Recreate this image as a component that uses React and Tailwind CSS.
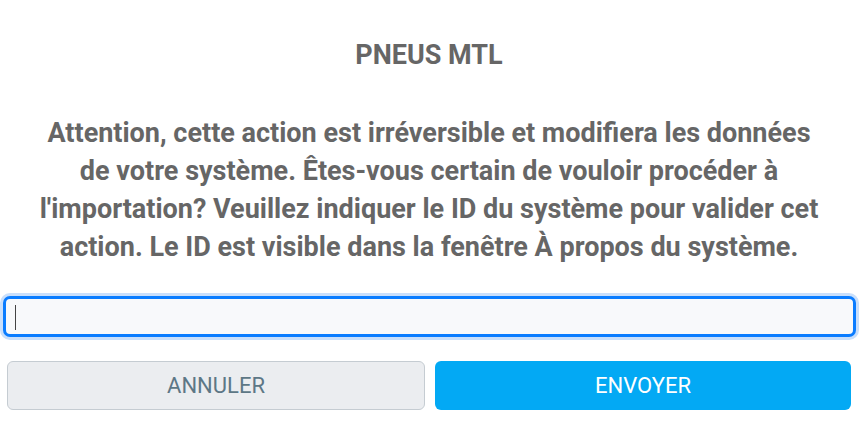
import React from 'react';

const lines = [
  'Attention, cette action est irréversible et modifiera les données',
  'de votre système. Êtes-vous certain de vouloir procéder à',
  "l'importation? Veuillez indiquer le ID du système pour valider cet",
  'action. Le ID est visible dans la fenêtre À propos du système.',
];

const ImportConfirm = () => {
  return (
    <div className="w-[863px] h-[422px] bg-white pl-[7px] pr-[12px] font-['Roboto',sans-serif] text-[#666666]">
      <h1 className="pt-[38px] text-center text-[27px] font-bold leading-[34px]">PNEUS MTL</h1>

      <p className="mt-[42px] text-center text-[27px] font-bold leading-[38px]">
        {lines.map((line, i) => (
          <React.Fragment key={i}>
            {line}
            {i < lines.length - 1 && <br />}
          </React.Fragment>
        ))}
      </p>

      <div className="relative mt-[30px] -ml-[4px] -mr-[5px]">
        <input
          type="text"
          className="block w-full h-[41px] rounded-[7px] border-[3px] border-[#0a7cff] bg-[#f8f9fb] px-[9px] outline-none ring-[3px] ring-[#c9dffb]"
        />
        {/* caret */}
        <span className="absolute left-[12px] top-[9px] h-[25px] w-px bg-[#444]" />
      </div>

      <div className="mt-[24px] flex gap-[10px]">
        <button className="flex-1 h-[49px] rounded-[6px] border border-[#c5ccd2] bg-[#ebedf0] text-[22px] text-[#5d7786]">
          ANNULER
        </button>
        <button className="flex-1 h-[49px] rounded-[6px] bg-[#03a9f4] text-[22px] text-white">
          ENVOYER
        </button>
      </div>
    </div>
  );
};

export default ImportConfirm;
